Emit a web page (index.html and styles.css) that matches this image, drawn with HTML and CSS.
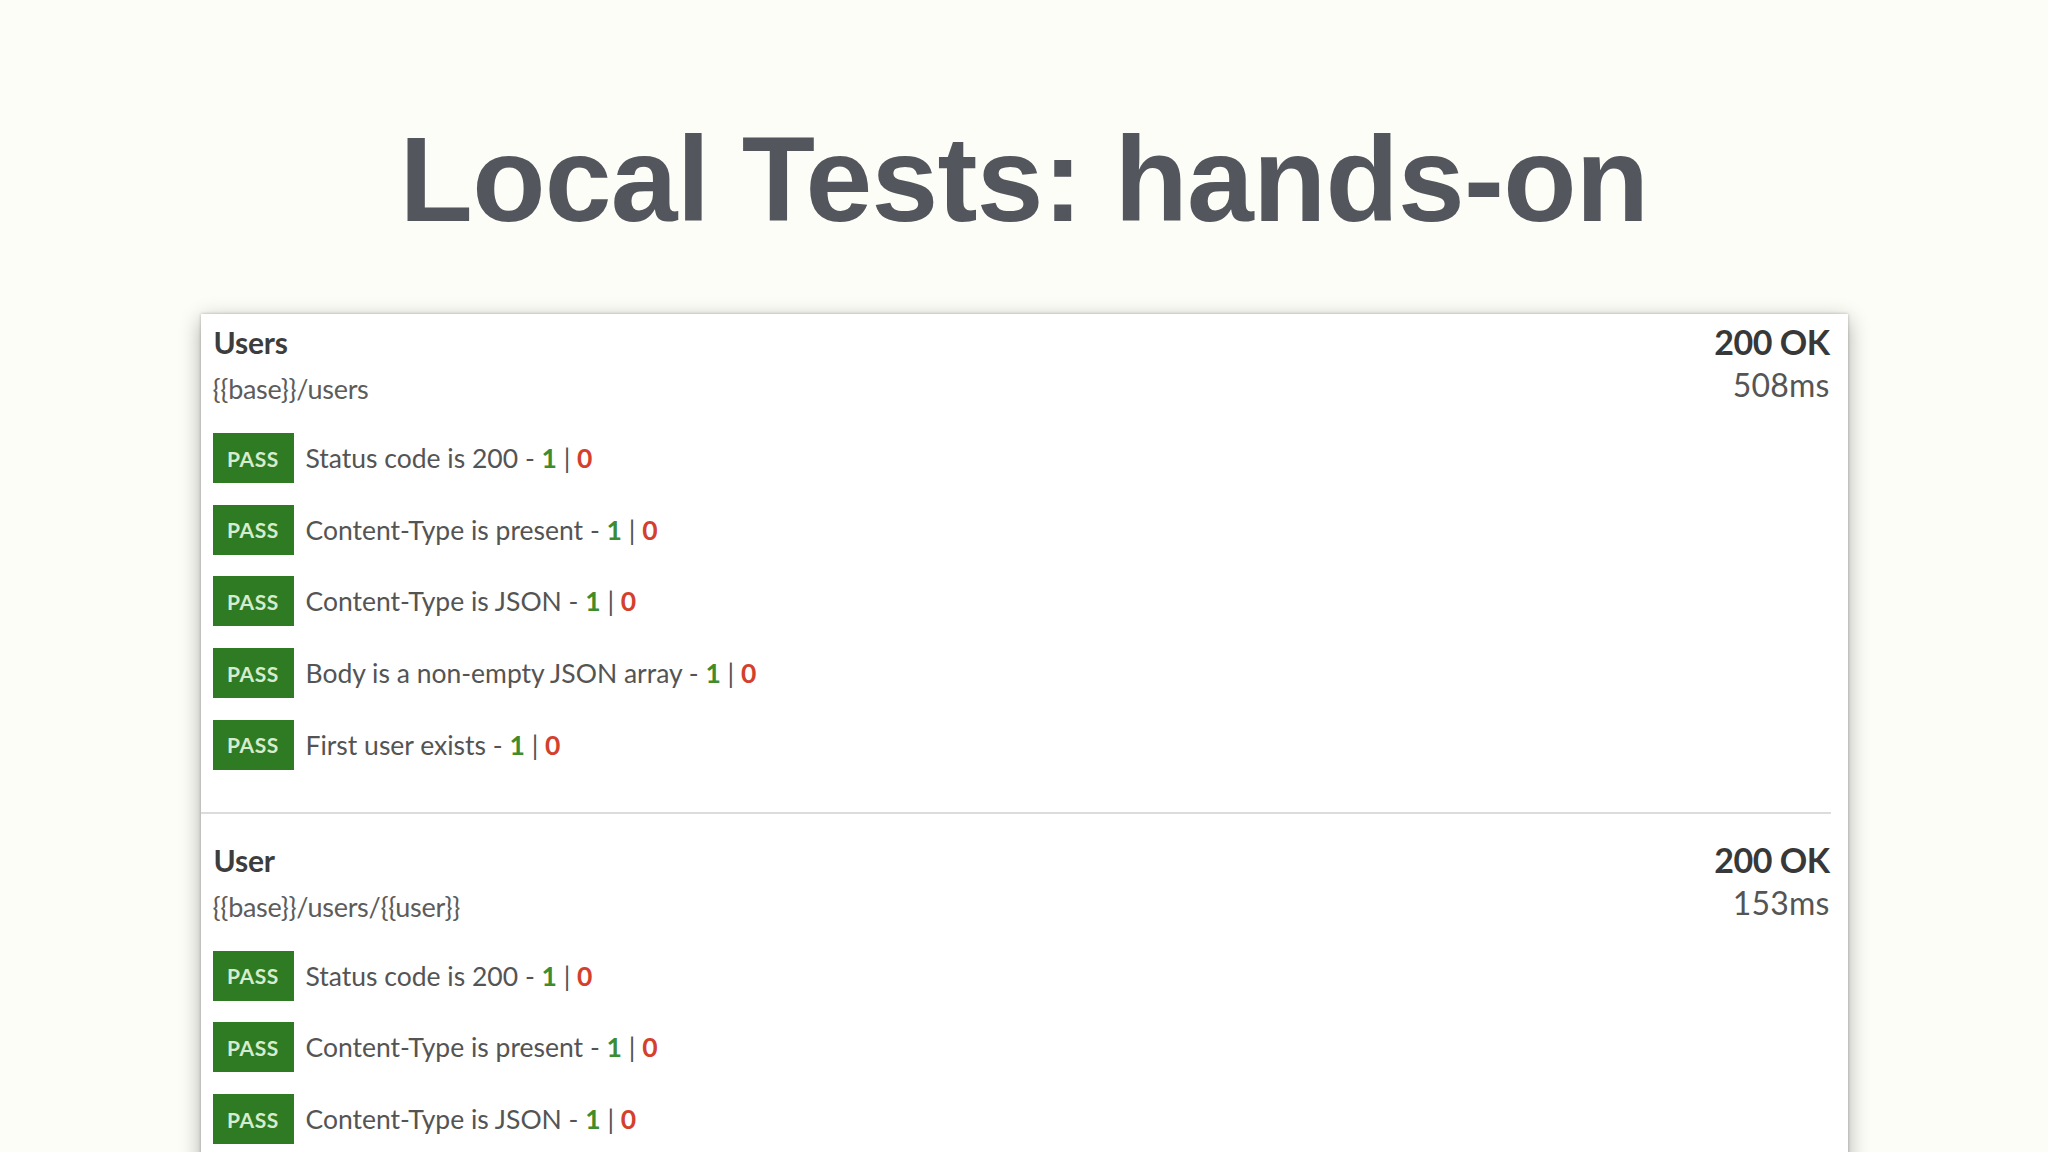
FILE: index.html
```html
<!DOCTYPE html>
<html lang="en">
<head>
<meta charset="utf-8">
<title>Local Tests: hands-on</title>
<link rel="stylesheet" href="styles.css">
</head>
<body>
<main class="slide">
  <h1 class="title">Local Tests: hands-on</h1>
  <section class="card">
    <div class="request">
      <div class="req-head">
        <div class="req-info">
          <div class="req-name">Users</div>
          <div class="req-url">{{base}}/users</div>
        </div>
        <div class="req-meta">
          <div class="req-status">200 OK</div>
          <div class="req-time">508ms</div>
        </div>
      </div>
      <ul class="tests">
        <li class="test"><span class="badge">PASS</span><span class="test-name">Status code is 200 - <b class="ok">1</b> | <b class="fail">0</b></span></li>
        <li class="test"><span class="badge">PASS</span><span class="test-name">Content-Type is present - <b class="ok">1</b> | <b class="fail">0</b></span></li>
        <li class="test"><span class="badge">PASS</span><span class="test-name">Content-Type is JSON - <b class="ok">1</b> | <b class="fail">0</b></span></li>
        <li class="test"><span class="badge">PASS</span><span class="test-name">Body is a non-empty JSON array - <b class="ok">1</b> | <b class="fail">0</b></span></li>
        <li class="test"><span class="badge">PASS</span><span class="test-name">First user exists - <b class="ok">1</b> | <b class="fail">0</b></span></li>
      </ul>
    </div>
    <div class="request">
      <div class="req-head">
        <div class="req-info">
          <div class="req-name">User</div>
          <div class="req-url">{{base}}/users/{{user}}</div>
        </div>
        <div class="req-meta">
          <div class="req-status">200 OK</div>
          <div class="req-time">153ms</div>
        </div>
      </div>
      <ul class="tests">
        <li class="test"><span class="badge">PASS</span><span class="test-name">Status code is 200 - <b class="ok">1</b> | <b class="fail">0</b></span></li>
        <li class="test"><span class="badge">PASS</span><span class="test-name">Content-Type is present - <b class="ok">1</b> | <b class="fail">0</b></span></li>
        <li class="test"><span class="badge">PASS</span><span class="test-name">Content-Type is JSON - <b class="ok">1</b> | <b class="fail">0</b></span></li>
      </ul>
    </div>
  </section>
</main>
</body>
</html>
```
FILE: styles.css
```css
html, body {
  margin: 0;
  padding: 0;
  height: 1152px;
  overflow: hidden;
  background: #fcfdf7;
}

.slide {
  display: flex;
  flex-direction: column;
  align-items: center;
  padding-top: 119px;
}

.title {
  margin: 0;
  font-family: "Liberation Sans", Arial, sans-serif;
  font-weight: 700;
  font-size: 120px;
  line-height: 120px;
  letter-spacing: -0.75px;
  color: #53565c;
}

.card {
  margin-top: 75px;
  width: 1647px;
  background: #ffffff;
  box-shadow: 0 6px 20px rgba(0, 0, 0, 0.32), 0 0 3px rgba(0, 0, 0, 0.25);
  font-family: Lato, "Noto Sans", sans-serif;
}

.request {
  margin-right: 17px;
  padding: 11px 0 42px 12px;
  border-bottom: 2px solid #dcdcdc;
  margin-bottom: 18px;
}

.req-head {
  display: flex;
  justify-content: space-between;
  align-items: flex-start;
}

.req-name {
  font-size: 30px;
  line-height: 34px;
  font-weight: 700;
  color: #3d3d3d;
  padding-left: 1px;
  letter-spacing: -0.2px;
}

.req-url {
  margin-top: 14px;
  font-size: 27px;
  line-height: 32px;
  color: #5c5c5c;
  letter-spacing: -0.3px;
}

.req-meta {
  margin-top: -4px;
  text-align: right;
  padding-right: 1px;
}

.req-status {
  font-size: 34px;
  line-height: 41px;
  font-weight: 700;
  color: #383838;
  letter-spacing: -0.5px;
}

.req-time {
  margin-top: 4px;
  font-size: 32px;
  line-height: 38px;
  color: #555555;
  letter-spacing: 0.2px;
}

.tests {
  list-style: none;
  margin: 28px 0 0 0;
  padding: 0;
  display: flex;
  flex-direction: column;
  gap: 21.7px;
}

.test {
  display: flex;
  align-items: center;
  gap: 12px;
  height: 50px;
}

.badge {
  flex: none;
  width: 81px;
  height: 50px;
  display: flex;
  align-items: center;
  justify-content: center;
  background: #2e7b23;
  color: #d6ecce;
  font-size: 21px;
  font-weight: 700;
  letter-spacing: 0.6px;
}

.test-name {
  font-size: 26.5px;
  color: #545454;
  white-space: nowrap;
}

.ok {
  color: #3f8c2f;
  font-weight: 700;
}

.fail {
  color: #d5402d;
  font-weight: 700;
}
```
